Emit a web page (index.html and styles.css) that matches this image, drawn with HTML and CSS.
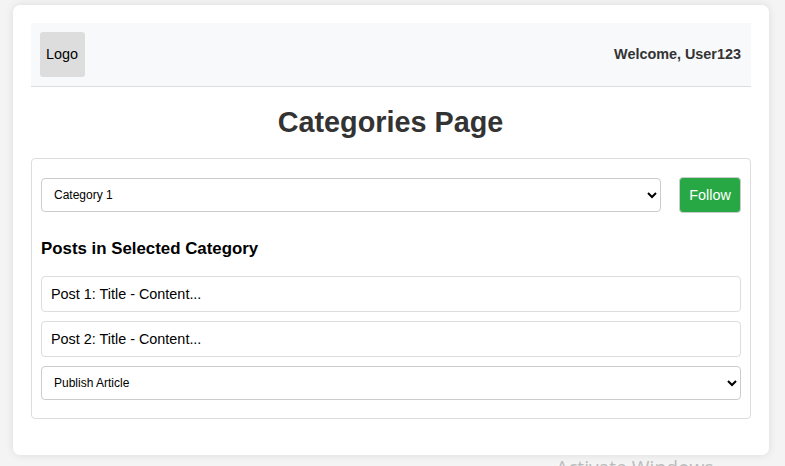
FILE: index.html
```html
<!DOCTYPE html>
<html lang="en">
<head>
<meta charset="utf-8">
<title>Categories Page</title>
<link rel="stylesheet" href="styles.css">
</head>
<body>
<div class="container">
  <header class="header">
    <div class="logo">Logo</div>
    <div class="welcome">Welcome, User123</div>
  </header>
  <h1 class="title">Categories Page</h1>
  <main class="panel">
    <div class="follow-row">
      <select class="select"><option>Category 1</option></select>
      <button class="follow">Follow</button>
    </div>
    <h3 class="subtitle">Posts in Selected Category</h3>
    <div class="post">Post 1: Title - Content...</div>
    <div class="post">Post 2: Title - Content...</div>
    <select class="select"><option>Publish Article</option></select>
  </main>
</div>
<div class="watermark">Activate Windows</div>
</body>
</html>
```
FILE: styles.css
```css
* { box-sizing: border-box; }
html { overflow: hidden; }
body {
  margin: 0;
  height: 466px;
  padding: 5px 16px 0 13px;
  overflow: hidden;
  background: #f4f4f4;
  font-family: "Liberation Sans", Arial, sans-serif;
  font-size: 14.4px;
  color: #000;
}
.container {
  height: 450px;
  padding: 18px;
  background: #fff;
  border-radius: 7px;
  box-shadow: 0 0 9px rgba(0, 0, 0, 0.1);
}
.header {
  display: flex;
  justify-content: space-between;
  align-items: center;
  height: 64px;
  padding: 9px;
  background: #f8f9fb;
  border-bottom: 1px solid #ddd;
}
.logo {
  display: flex;
  align-items: center;
  justify-content: center;
  width: 45px;
  height: 45px;
  padding: 0 1px 2px 0;
  background: #ddd;
  border-radius: 3px;
}
.welcome {
  padding: 0 1px 2px 0;
  font-weight: bold;
  color: #333;
}
.title {
  margin: 18px 0;
  padding-right: 1px;
  height: 35px;
  line-height: 35px;
  font-size: 28.8px;
  text-align: center;
  color: #333;
}
.panel {
  height: 261px;
  padding: 18px 9px;
  border: 1px solid #ddd;
  border-radius: 4px;
}
.follow-row {
  display: flex;
  align-items: center;
  gap: 18px;
  height: 36px;
}
.select {
  display: block;
  width: 100%;
  height: 34px;
  padding: 0 0 0 8px;
  border: 1px solid #ccc;
  border-radius: 4px;
  background: #fff;
  color: #000;
  font: 12px "Liberation Sans", Arial, sans-serif;
}
.follow {
  flex: none;
  width: 62px;
  height: 36px;
  padding: 0;
  border: 1px solid #ccc;
  border-radius: 4px;
  background: #28a745;
  color: #fff;
  font: 14.4px "Liberation Sans", Arial, sans-serif;
}
.subtitle {
  margin: 26px 0 17px;
  height: 20px;
  line-height: 20px;
  font-size: 16.85px;
}
.post {
  height: 36px;
  margin-bottom: 9px;
  padding: 0 9px;
  line-height: 34px;
  border: 1px solid #ddd;
  border-radius: 4px;
}
.watermark {
  position: absolute;
  left: 556px;
  top: 454px;
  line-height: 27px;
  white-space: nowrap;
  font-family: "Open Sans", sans-serif;
  font-size: 19.2px;
  color: #bcbcbc;
}
```
